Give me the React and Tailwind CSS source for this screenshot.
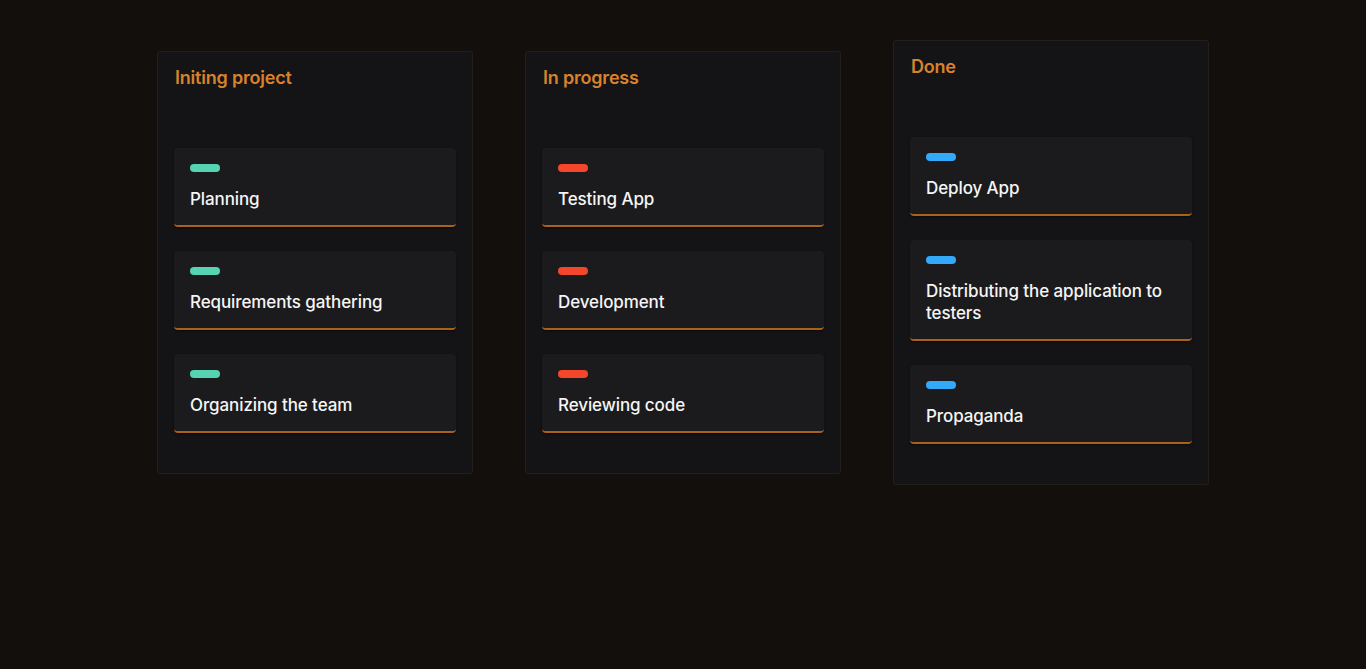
const columns = [
  {
    title: "Initing project",
    color: "bg-[#56d4b1]",
    tasks: ["Planning", "Requirements gathering", "Organizing the team"],
  },
  {
    title: "In progress",
    color: "bg-[#f4462a]",
    tasks: ["Testing App", "Development", "Reviewing code"],
  },
  {
    title: "Done",
    color: "bg-[#33aaf9]",
    tasks: ["Deploy App", "Distributing the application to testers", "Propaganda"],
  },
];

export default function App() {
  return (
    <div
      className="min-h-screen bg-[#120f0d] flex justify-center items-center gap-[52px] pt-10 pb-[184px] text-white"
      style={{ fontFamily: "Inter, 'Noto Sans', sans-serif" }}
    >
      {columns.map((col) => (
        <div
          key={col.title}
          className="w-[316px] bg-[#141416] border border-[#241f1b] rounded-[3px] p-4"
        >
          <h2 className="text-[18px] leading-[20px] font-semibold tracking-[-0.2px] text-[#d9822b] pl-px mb-[60px]">
            {col.title}
          </h2>

          {col.tasks.map((task) => (
            <div
              key={task}
              className="bg-[#1b1b1d] rounded-[4px] border-b-2 border-[#a8621e] shadow-[0_1px_2px_rgba(0,0,0,0.5)] p-4 pb-[15px] mb-6"
            >
              <div className={`w-[30px] h-2 rounded-full ${col.color}`}></div>
              <p className="mt-4 text-[17px] leading-[22px] font-medium tracking-[-0.1px] text-[#f5f5f5]">{task}</p>
            </div>
          ))}
        </div>
      ))}
    </div>
  );
}
